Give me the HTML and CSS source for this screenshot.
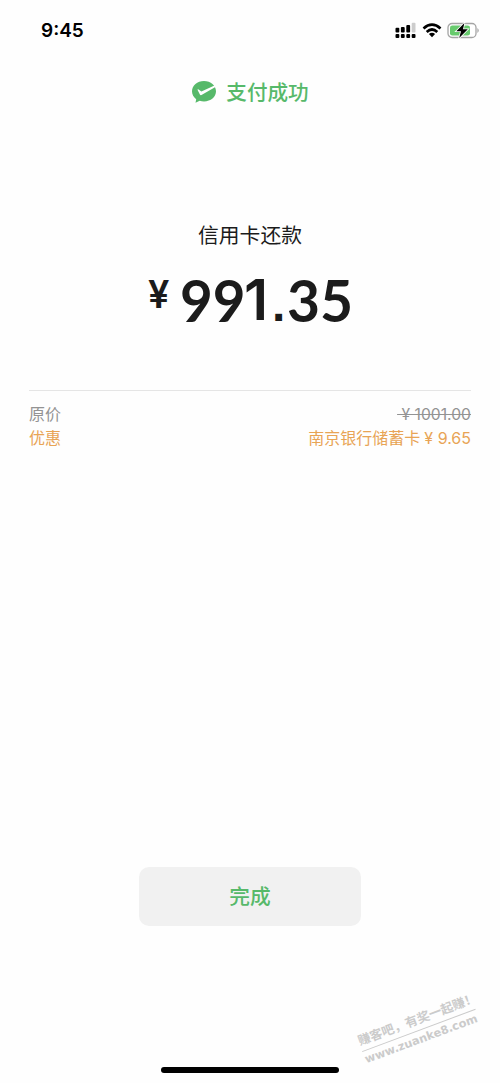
FILE: index.html
```html
<!DOCTYPE html>
<html lang="zh-CN">
<head>
<meta charset="utf-8">
<title>支付成功</title>
<link rel="stylesheet" href="styles.css">
</head>
<body>
<main class="screen">
  <header class="status-bar">
    <time class="clock">9:45</time>
    <div class="status-icons">
      <svg class="signal" width="21" height="17" viewBox="0 0 21 17">
        <g fill="#000"><rect x="0.5" y="5.8" width="3.8" height="4.7" rx="1"/><rect x="5.9" y="5.1" width="3.8" height="5.4" rx="1"/><rect x="11.3" y="3" width="3.8" height="7.5" rx="1"/>
        <rect x="0.5" y="12" width="3.8" height="4" rx="1"/><rect x="5.9" y="12" width="3.8" height="4" rx="1"/><rect x="11.3" y="12" width="3.8" height="4" rx="1"/><rect x="16.7" y="12" width="3.8" height="4" rx="1"/></g>
        <rect x="16.7" y="0.7" width="3.8" height="9.8" rx="1" fill="#ccc"/>
      </svg>
      <svg class="wifi" width="20" height="15" viewBox="0 0 20 15">
        <g fill="none" stroke="#000" stroke-width="2.7"><path d="M1.5 5.4Q10-2.2 18.5 5.4"/><path d="M4.7 8.9Q10 4.1 15.3 8.9"/></g>
        <path d="M6.9 11.1Q10 8.5 13.1 11.1L10 14.3Z"/>
      </svg>
      <svg class="battery" width="34" height="17" viewBox="0 0 34 17">
        <rect x="1" y="1.5" width="28" height="14" rx="4" fill="#fff" stroke="#a4a4a4" stroke-width="1.3"/>
        <rect x="3" y="3.5" width="20" height="10" rx="2.3" fill="#67ca6d"/>
        <path d="M30.4 6q2.8 2.5 0 5z" fill="#a4a4a4"/>
        <path d="M17.4 1L9.3 9.2H14L12.2 16L20.8 7.3H16Z" fill="#000" stroke="#fff" stroke-width="1.6" paint-order="stroke"/>
      </svg>
    </div>
  </header>
  <div class="result">
    <svg class="logo" width="26" height="24" viewBox="0 0 26 24">
      <path fill="#57b96a" d="M13 1C6.2 1 1 5.6 1 11.3c0 3.2 1.6 6 4.2 7.9L4.5 22.8l4.2-2.1c1.4.5 2.8.7 4.3.7 6.8 0 12-4.5 12-10.1S19.8 1 13 1z"/>
      <path fill="#fff" d="M7.2 9.2L10.4 11.6L24 5.3L24.4 6.9L10.5 15Q9.4 15.5 8.9 14.4L6.6 10Q6.4 8.9 7.2 9.2Z"/>
    </svg>
    <span class="result-text">支付成功</span>
  </div>
  <h1 class="title">信用卡还款</h1>
  <div class="amount"><span class="currency">¥</span><span class="number"><span class="nines">99</span><span class="one">1</span><span class="point">.</span><span class="cents">35</span></span></div>
  <section class="details">
    <div class="row"><span>原价</span><s class="original">&nbsp;¥ 1001.00</s></div>
    <div class="row discount"><span>优惠</span><span>南京银行储蓄卡<span class="saved">¥ 9.65</span></span></div>
  </section>
  <button class="done">完成</button>
  <div class="home-indicator"></div>
  <aside class="watermark"><div class="slogan">赚客吧，有奖一起赚！</div><div class="site">www.zuanke8.com</div></aside>
</main>
</body>
</html>
```
FILE: styles.css
```css
* { box-sizing: border-box; }
body { margin: 0; background: #fff; }
.screen {
  position: relative;
  display: flex;
  flex-direction: column;
  align-items: center;
  width: 500px;
  height: 1083px;
  padding-bottom: 10px;
  overflow: hidden;
  background: #fefefe;
  color: #1b1b1b;
  font-family: Inter, "Noto Sans CJK SC", sans-serif;
}
.status-bar {
  display: flex;
  justify-content: space-between;
  align-items: center;
  width: 100%;
  height: 60px;
  padding: 0 19px 0 41px;
}
.clock { font-size: 19px; font-weight: 600; color: #000; }
.status-icons { display: flex; align-items: center; gap: 6px; }
.battery { margin-left: -1px; }
.result {
  display: flex;
  align-items: center;
  gap: 9px;
  height: 32px;
  margin-top: 16px;
  color: #57b96a;
  font-size: 20.6px;
  font-weight: 500;
}
.result-text { line-height: 30px; padding-top: 1px; }
.title {
  margin: 113px 0 0;
  height: 30px;
  line-height: 30px;
  font-size: 20.8px;
  font-weight: 400;
}
.amount {
  display: flex;
  align-items: flex-start;
  width: 204px;
  height: 60px;
  margin-top: 19px;
  font-weight: 600;
}
.currency { flex: 0 0 32px; font-size: 38px; line-height: 48px; }
.number {
  display: flex;
  flex: none;
  font-size: 58px;
  line-height: 60px;
}
.number > span { flex: none; }
.nines { width: 64px; font-family: Lato, sans-serif; font-size: 56.5px; font-weight: 700; line-height: 60px; }
.one { width: 28px; font-size: 57px; }
.point { width: 15px; font-family: "Liberation Sans", sans-serif; font-size: 48px; font-weight: 700; line-height: 69px; }
.cents { font-family: Lato, sans-serif; font-size: 57px; font-weight: 700; line-height: 60px; }
.details {
  width: 442px;
  margin-top: 60px;
  padding-top: 12px;
  border-top: 1px solid #e5e5e5;
  color: #939393;
  font-size: 16px;
}
.row { display: flex; justify-content: space-between; height: 24px; line-height: 23px; }
.original { font-size: 15.7px; line-height: 24px; }
.discount { color: #e8a455; }
.saved { margin-left: 4px; font-size: 16px; }
.done {
  width: 222px;
  height: 59px;
  margin-top: 416px;
  padding: 0;
  border: 0;
  border-radius: 10px;
  background: #f1f1f1;
  color: #57b96a;
  font: 500 20.7px/60px Inter, "Noto Sans CJK SC", sans-serif;
}
.home-indicator { width: 178px; height: 6px; margin-top: auto; border-radius: 3px; background: #000; }
.watermark {
  position: absolute;
  left: 358px;
  top: 1012px;
  width: 121px;
  transform: rotate(-20.5deg);
  color: #cbcbcb;
  font-weight: 700;
  white-space: nowrap;
}
.slogan { height: 19px; border-bottom: 1px solid #cbcbcb; font-size: 12.6px; line-height: 15px; }
.site { font-family: "DejaVu Sans", sans-serif; font-size: 11.4px; line-height: 16px; }
```
